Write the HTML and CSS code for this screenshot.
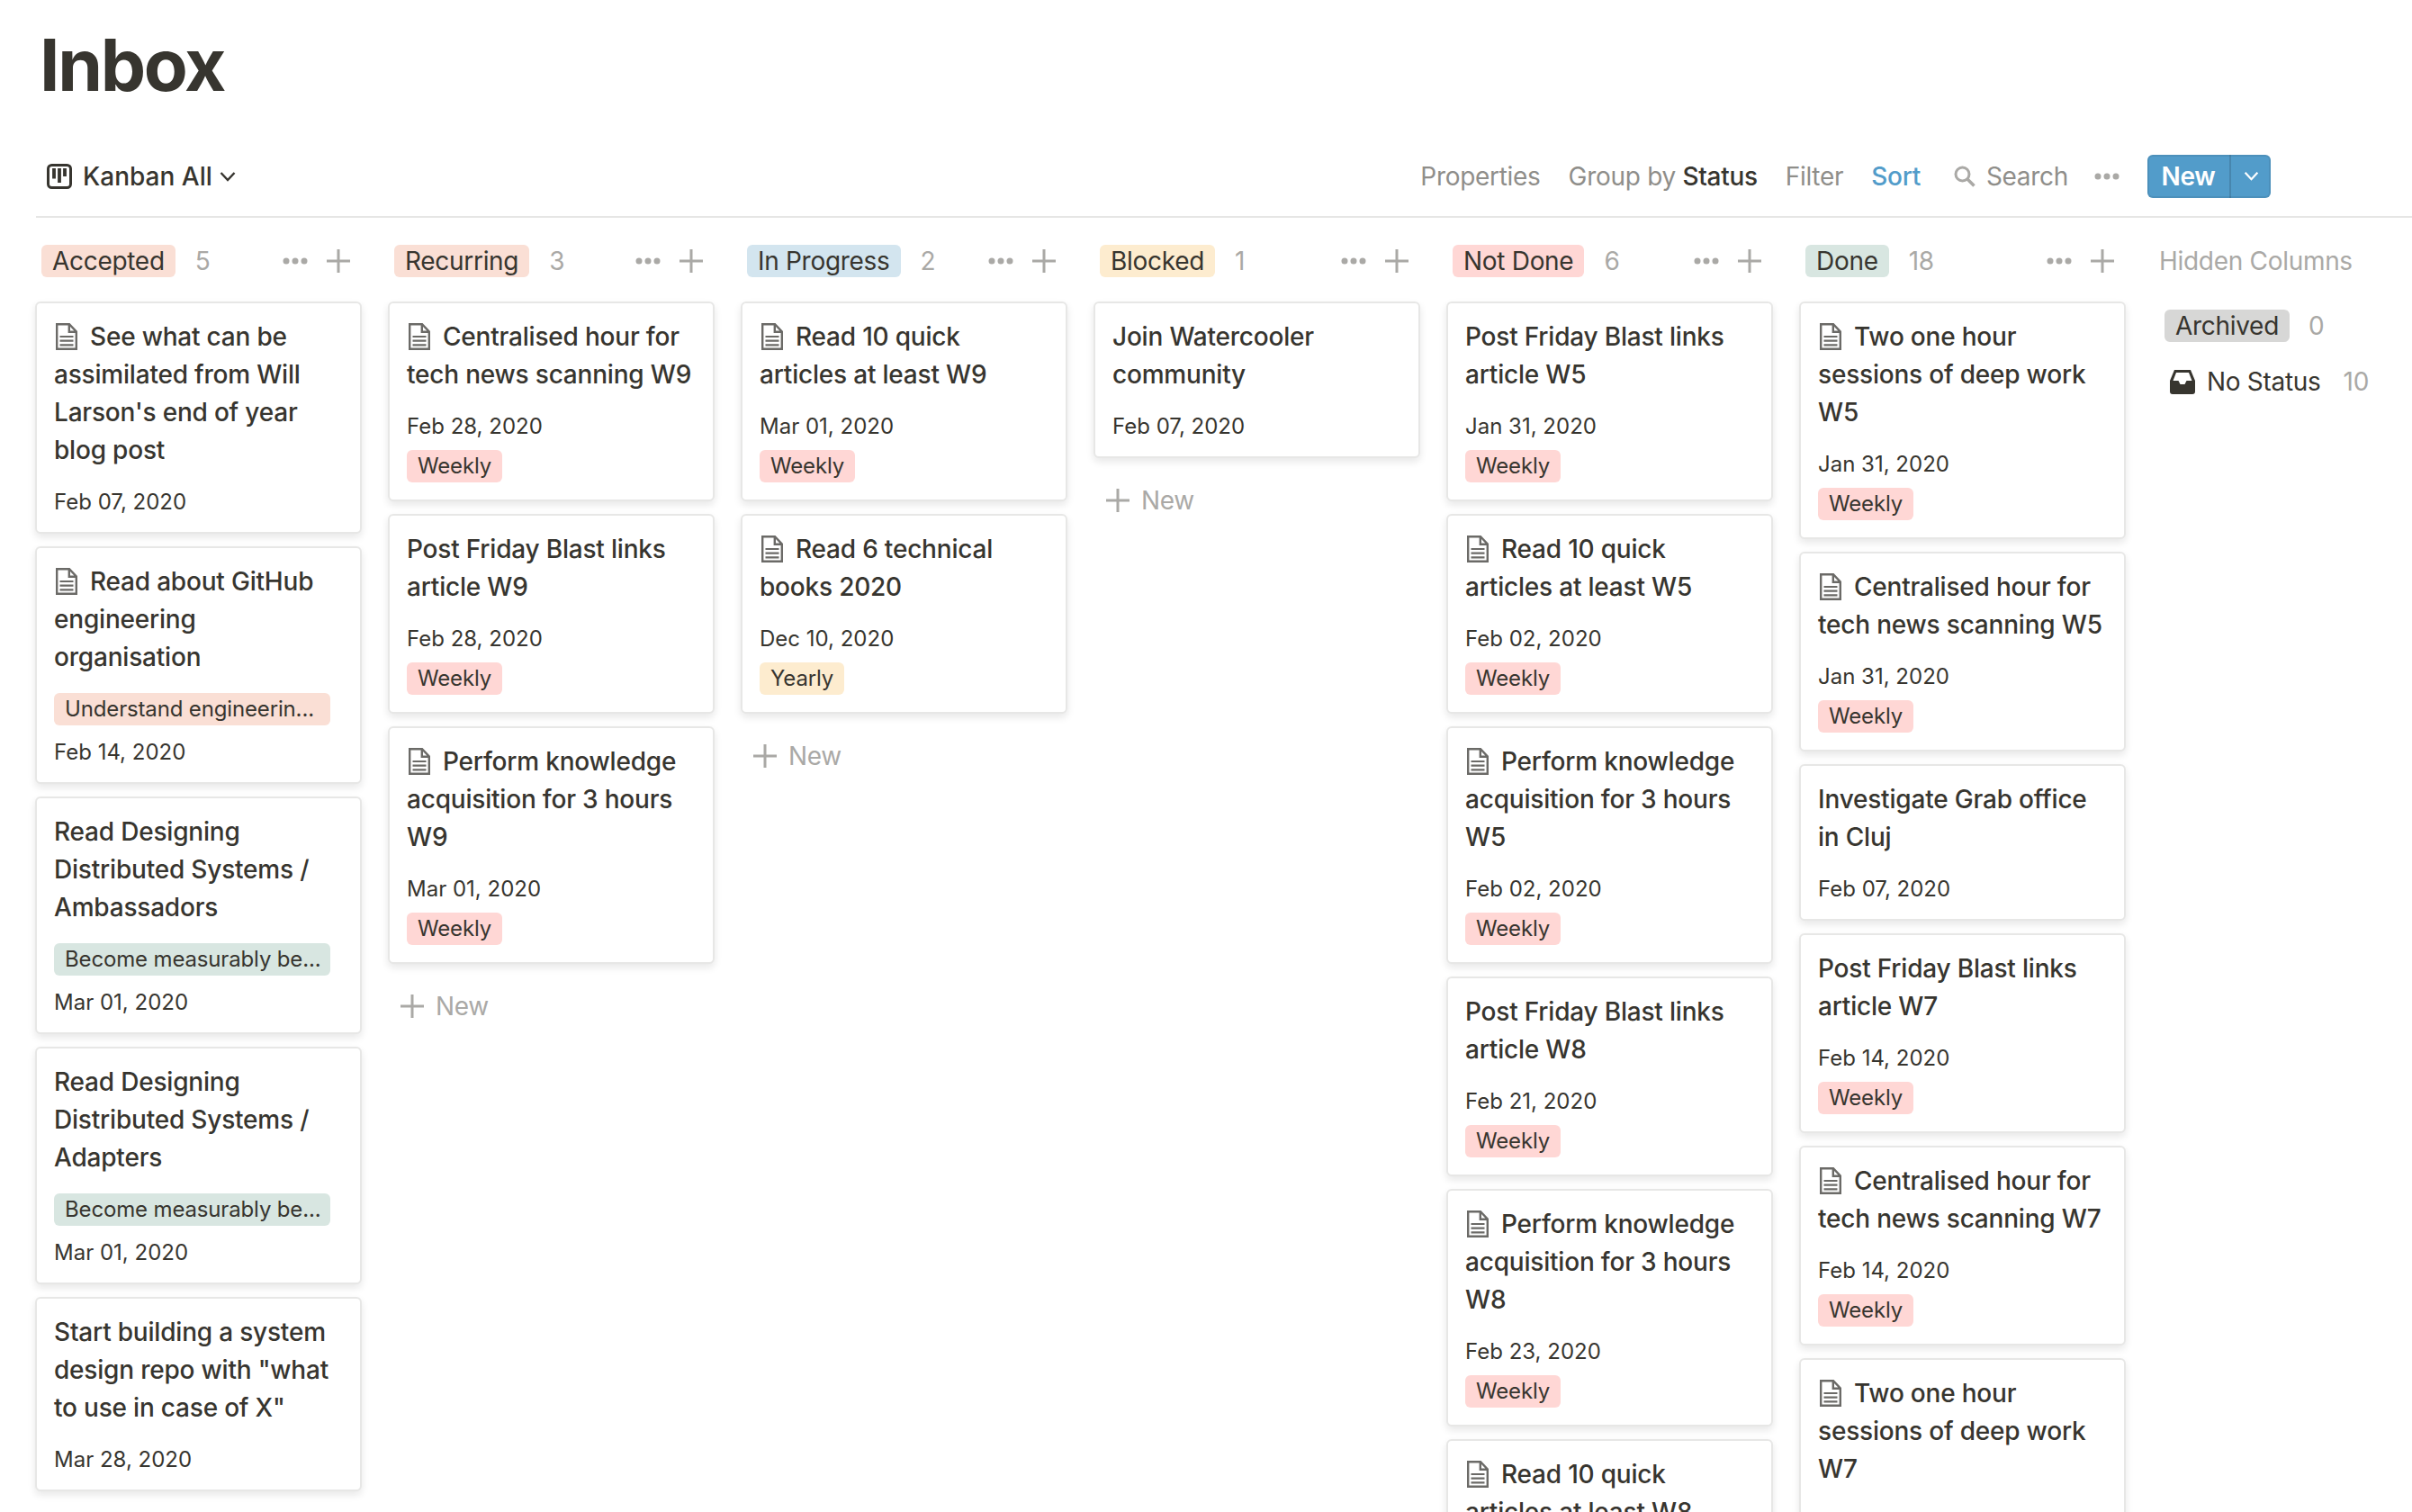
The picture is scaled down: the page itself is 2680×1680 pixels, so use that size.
FILE: index.html
```html
<!DOCTYPE html>
<html lang="en">
<head>
  <meta charset="UTF-8">
  <title>Inbox</title>
  <link rel="stylesheet" href="styles.css">
</head>
<body>

  <svg class="defs" width="0" height="0">
    <symbol id="page" viewBox="0 0 24 30">
      <path d="M1.200 1.200H15L22.800 9.500V28.800H1.200Z M14.800 1.200V9.800H22.800" fill="none" stroke="#6b6a67" stroke-width="2.400"/>
      <path d="M4.500 15H19.500M4.500 19.700H19.500M4.500 24.300H19.500" stroke="#6b6a67" stroke-width="2.200"/>
    </symbol>
    <symbol id="dots" viewBox="0 0 28 8">
      <circle cx="4" cy="4" r="3.500" fill="#aaa9a6"/>
      <circle cx="14" cy="4" r="3.500" fill="#aaa9a6"/>
      <circle cx="24" cy="4" r="3.500" fill="#aaa9a6"/>
    </symbol>
    <symbol id="plus" viewBox="0 0 26 26">
      <path d="M13 0V26M0 13H26" stroke="#aaa9a6" stroke-width="3"/>
    </symbol>
  </svg>

  <h1 class="title">Inbox</h1>

  <div class="toolbar">
    <div class="view-name">
      <svg class="kanban-icon" viewBox="0 0 28 28">
        <rect x="1.500" y="1.500" width="25" height="25" rx="4" fill="none" stroke="#37352f" stroke-width="3"/>
        <path d="M8 5V16.500M14 5V21M20 5V14" stroke="#37352f" stroke-width="3.800"/>
      </svg>
      Kanban All
      <svg class="chevron" viewBox="0 0 18 12"><path d="M1.500 2L9 10L16.500 2" fill="none" stroke="#37352f" stroke-width="2.400"/></svg>
    </div>
    <div class="actions">
      <span>Properties</span>
      <span>Group by <b>Status</b></span>
      <span>Filter</span>
      <span class="active">Sort</span>
      <span class="search">
        <svg class="search-icon" viewBox="0 0 24 24">
          <circle cx="9.500" cy="9.500" r="7.500" fill="none" stroke="#aaa9a6" stroke-width="3"/>
          <path d="M15 15L22.500 22.500" stroke="#aaa9a6" stroke-width="3.500"/>
        </svg>
        Search
      </span>
      <svg class="dots"><use href="#dots"/></svg>
      <div class="new-button">
        <span class="new-label">New</span>
        <span class="new-arrow"><svg viewBox="0 0 18 12"><path d="M1.500 2L9 10L16.500 2" fill="none" stroke="#fff" stroke-width="2.400"/></svg></span>
      </div>
    </div>
  </div>

  <div class="board">

    <div class="column">
      <div class="column-head">
        <span class="tag orange">Accepted</span><span class="count">5</span>
        <svg class="dots"><use href="#dots"/></svg><svg class="plus"><use href="#plus"/></svg>
      </div>
      <div class="card">
        <div class="card-title"><svg class="page"><use href="#page"/></svg>See what can be assimilated from Will Larson's end of year blog post</div>
        <div class="date">Feb 07, 2020</div>
      </div>
      <div class="card">
        <div class="card-title"><svg class="page"><use href="#page"/></svg>Read about GitHub engineering organisation</div>
        <div class="tag wide orange">Understand engineerin...</div>
        <div class="date">Feb 14, 2020</div>
      </div>
      <div class="card">
        <div class="card-title">Read Designing Distributed Systems / Ambassadors</div>
        <div class="tag wide green">Become measurably be...</div>
        <div class="date">Mar 01, 2020</div>
      </div>
      <div class="card">
        <div class="card-title">Read Designing Distributed Systems / Adapters</div>
        <div class="tag wide green">Become measurably be...</div>
        <div class="date">Mar 01, 2020</div>
      </div>
      <div class="card">
        <div class="card-title">Start building a system design repo with "what to use in case of X"</div>
        <div class="date">Mar 28, 2020</div>
      </div>
    </div>

    <div class="column">
      <div class="column-head">
        <span class="tag orange">Recurring</span><span class="count">3</span>
        <svg class="dots"><use href="#dots"/></svg><svg class="plus"><use href="#plus"/></svg>
      </div>
      <div class="card">
        <div class="card-title"><svg class="page"><use href="#page"/></svg>Centralised hour for tech news scanning W9</div>
        <div class="date">Feb 28, 2020</div>
        <div class="tag red">Weekly</div>
      </div>
      <div class="card">
        <div class="card-title">Post Friday Blast links article W9</div>
        <div class="date">Feb 28, 2020</div>
        <div class="tag red">Weekly</div>
      </div>
      <div class="card">
        <div class="card-title"><svg class="page"><use href="#page"/></svg>Perform knowledge acquisition for 3 hours W9</div>
        <div class="date">Mar 01, 2020</div>
        <div class="tag red">Weekly</div>
      </div>
      <div class="new-row"><svg class="plus"><use href="#plus"/></svg>New</div>
    </div>

    <div class="column">
      <div class="column-head">
        <span class="tag blue">In Progress</span><span class="count">2</span>
        <svg class="dots"><use href="#dots"/></svg><svg class="plus"><use href="#plus"/></svg>
      </div>
      <div class="card">
        <div class="card-title"><svg class="page"><use href="#page"/></svg>Read 10 quick articles at least W9</div>
        <div class="date">Mar 01, 2020</div>
        <div class="tag red">Weekly</div>
      </div>
      <div class="card">
        <div class="card-title"><svg class="page"><use href="#page"/></svg>Read 6 technical books 2020</div>
        <div class="date">Dec 10, 2020</div>
        <div class="tag yellow">Yearly</div>
      </div>
      <div class="new-row"><svg class="plus"><use href="#plus"/></svg>New</div>
    </div>

    <div class="column">
      <div class="column-head">
        <span class="tag yellow">Blocked</span><span class="count">1</span>
        <svg class="dots"><use href="#dots"/></svg><svg class="plus"><use href="#plus"/></svg>
      </div>
      <div class="card">
        <div class="card-title">Join Watercooler community</div>
        <div class="date">Feb 07, 2020</div>
      </div>
      <div class="new-row"><svg class="plus"><use href="#plus"/></svg>New</div>
    </div>

    <div class="column">
      <div class="column-head">
        <span class="tag red">Not Done</span><span class="count">6</span>
        <svg class="dots"><use href="#dots"/></svg><svg class="plus"><use href="#plus"/></svg>
      </div>
      <div class="card">
        <div class="card-title">Post Friday Blast links article W5</div>
        <div class="date">Jan 31, 2020</div>
        <div class="tag red">Weekly</div>
      </div>
      <div class="card">
        <div class="card-title"><svg class="page"><use href="#page"/></svg>Read 10 quick articles at least W5</div>
        <div class="date">Feb 02, 2020</div>
        <div class="tag red">Weekly</div>
      </div>
      <div class="card">
        <div class="card-title"><svg class="page"><use href="#page"/></svg>Perform knowledge acquisition for 3 hours W5</div>
        <div class="date">Feb 02, 2020</div>
        <div class="tag red">Weekly</div>
      </div>
      <div class="card">
        <div class="card-title">Post Friday Blast links article W8</div>
        <div class="date">Feb 21, 2020</div>
        <div class="tag red">Weekly</div>
      </div>
      <div class="card">
        <div class="card-title"><svg class="page"><use href="#page"/></svg>Perform knowledge acquisition for 3 hours W8</div>
        <div class="date">Feb 23, 2020</div>
        <div class="tag red">Weekly</div>
      </div>
      <div class="card">
        <div class="card-title"><svg class="page"><use href="#page"/></svg>Read 10 quick articles at least W8</div>
      </div>
    </div>

    <div class="column">
      <div class="column-head">
        <span class="tag green">Done</span><span class="count">18</span>
        <svg class="dots"><use href="#dots"/></svg><svg class="plus"><use href="#plus"/></svg>
      </div>
      <div class="card">
        <div class="card-title"><svg class="page"><use href="#page"/></svg>Two one hour sessions of deep work W5</div>
        <div class="date">Jan 31, 2020</div>
        <div class="tag red">Weekly</div>
      </div>
      <div class="card">
        <div class="card-title"><svg class="page"><use href="#page"/></svg>Centralised hour for tech news scanning W5</div>
        <div class="date">Jan 31, 2020</div>
        <div class="tag red">Weekly</div>
      </div>
      <div class="card">
        <div class="card-title">Investigate Grab office in Cluj</div>
        <div class="date">Feb 07, 2020</div>
      </div>
      <div class="card">
        <div class="card-title">Post Friday Blast links article W7</div>
        <div class="date">Feb 14, 2020</div>
        <div class="tag red">Weekly</div>
      </div>
      <div class="card">
        <div class="card-title"><svg class="page"><use href="#page"/></svg>Centralised hour for tech news scanning W7</div>
        <div class="date">Feb 14, 2020</div>
        <div class="tag red">Weekly</div>
      </div>
      <div class="card">
        <div class="card-title"><svg class="page"><use href="#page"/></svg>Two one hour sessions of deep work W7</div>
        <div class="date">Feb 14, 2020</div>
      </div>
    </div>

    <div class="hidden-columns">
      <div class="hidden-head">Hidden Columns</div>
      <div class="hidden-row">
        <span class="tag gray">Archived</span><span class="count">0</span>
      </div>
      <div class="hidden-row no-status">
        <svg class="inbox-icon" viewBox="0 0 28 28">
          <path fill-rule="evenodd" d="M5 1H23L28 13V25Q28 28 25 28H3Q0 28 0 25V13ZM7 4L3.500 13H9.500L11.500 17H16.500L18.500 13H24.500L21 4Z" fill="#37352f"/>
        </svg>
        No Status<span class="count">10</span>
      </div>
    </div>

  </div>

</body>
</html>
```

FILE: styles.css
```css
/* General Styles */
html, body {
  height: 1680px;
  overflow: hidden;
}

body {
  font-family: Inter, "Noto Sans", sans-serif;
  background-color: #ffffff;
  margin: 0;
  padding: 0;
  color: #37352f;
  font-size: 28px;
  letter-spacing: -0.300px;
}

.defs {
  display: block;
  height: 0;
}

.title {
  margin: 0;
  padding: 24px 0 0 44px;
  height: 148px;
  box-sizing: border-box;
  font-size: 80px;
  line-height: 96px;
  font-weight: 700;
  letter-spacing: -2.300px;
}

/* Toolbar */
.toolbar {
  display: flex;
  justify-content: space-between;
  align-items: center;
  height: 94px;
  box-sizing: border-box;
  margin-left: 40px;
  padding: 24px 157px 21px 12px;
  border-bottom: 2px solid #e6e6e5;
}

.view-name {
  display: flex;
  align-items: center;
  font-weight: 500;
  letter-spacing: 0;
}

.kanban-icon {
  width: 28px;
  height: 28px;
  margin-right: 12px;
}

.chevron {
  width: 18px;
  height: 12px;
  margin-left: 8px;
}

.actions {
  display: flex;
  align-items: center;
  gap: 31px;
  color: #8f8e8a;
}

.actions b {
  font-weight: 500;
  color: #37352f;
}

.active {
  color: #529cca;
  font-weight: 500;
}

.search {
  display: flex;
  align-items: center;
  gap: 12px;
  margin-left: 6px;
}

.search-icon {
  width: 24px;
  height: 24px;
}

.dots {
  width: 28px;
  height: 8px;
  flex-shrink: 0;
}

.actions .dots {
  margin-left: -2px;
}

.plus {
  width: 26px;
  height: 26px;
  flex-shrink: 0;
}

.new-button {
  display: flex;
  height: 48px;
  width: 137px;
  box-sizing: border-box;
  border-radius: 6px;
  background-color: #529cca;
  box-shadow: inset 0 0 0 2px rgba(15, 15, 15, 0.08);
  color: #ffffff;
  font-weight: 600;
  line-height: 48px;
}

.new-label {
  width: 91px;
  text-align: center;
  border-right: 2px solid rgba(15, 15, 15, 0.15);
}

.new-arrow {
  flex: 1;
  display: flex;
  align-items: center;
  justify-content: center;
}

.new-arrow svg {
  width: 17px;
  height: 11px;
}

/* Board */
.board {
  display: flex;
  padding: 30px 0 0 39px;
}

.column {
  width: 392px;
  flex-shrink: 0;
  box-sizing: border-box;
  padding-right: 29px;
}

.column-head {
  display: flex;
  align-items: center;
  height: 36px;
  padding: 0 13px 0 7px;
  margin-bottom: 27px;
}

.column-head .dots {
  margin-left: auto;
  margin-right: 21px;
}

.tag {
  display: inline-block;
  height: 36px;
  line-height: 36px;
  padding: 0 12px;
  border-radius: 6px;
  white-space: nowrap;
}

.count {
  margin-left: 22px;
  color: #aaa9a6;
}

.orange { background-color: #fadfd5; }
.red { background-color: #ffd7d5; }
.green { background-color: #d8e6e1; }
.blue { background-color: #d3e5ef; }
.yellow { background-color: #fdeccf; }
.gray { background-color: #d7d7d6; }

/* Cards */
.card {
  width: 363px;
  box-sizing: border-box;
  margin-bottom: 14px;
  padding: 16px 18px 15px 19px;
  background-color: #ffffff;
  border: 2px solid #e7e7e6;
  border-radius: 6px;
  box-shadow: 0 4px 8px rgba(15, 15, 15, 0.1);
}

.card-title {
  line-height: 42px;
  font-weight: 500;
  letter-spacing: -0.200px;
  margin-bottom: 19px;
}

.page {
  width: 24px;
  height: 30px;
  margin: 0 14px 0 2px;
  vertical-align: -5px;
}

.date {
  height: 36px;
  line-height: 36px;
  font-size: 24px;
  letter-spacing: 0;
}

.card .tag {
  display: block;
  width: fit-content;
  font-size: 24px;
  letter-spacing: -0.150px;
  margin-bottom: 4px;
}

.card .wide {
  width: auto;
  margin-right: 15px;
}

.date + .tag {
  margin-top: 8px;
}

.tag + .date {
  margin-top: 12px;
}

.new-row {
  display: flex;
  align-items: center;
  gap: 13px;
  height: 66px;
  padding-left: 14px;
  color: #aaa9a6;
}

/* Hidden columns */
.hidden-columns {
  padding-left: 8px;
}

.hidden-head {
  height: 36px;
  line-height: 36px;
  margin-bottom: 36px;
  color: #aaa9a6;
}

.hidden-row {
  display: flex;
  align-items: center;
  height: 36px;
  margin: 0 0 26px 6px;
}

.hidden-row .tag + .count {
  margin-left: 21px;
}

.no-status .count {
  margin-left: 25px;
}

.no-status {
  padding-left: 6px;
}

.inbox-icon {
  width: 28px;
  height: 28px;
  margin-right: 13px;
}
```
